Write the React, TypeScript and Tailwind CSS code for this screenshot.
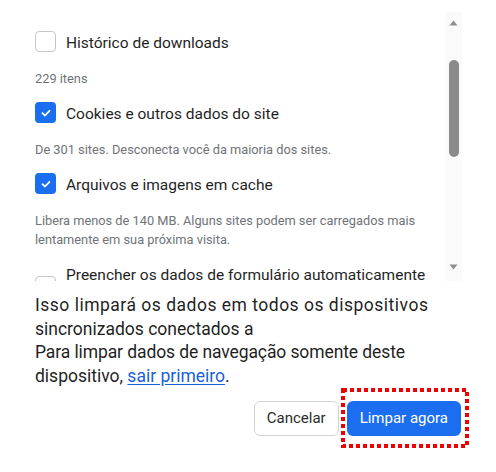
import React from 'react';

type Item = {
  label: string;
  desc?: string;
  checked: boolean;
  boxOffset?: string;
};

const items: Item[] = [
  { label: 'Histórico de downloads', desc: '229 itens', checked: false },
  { label: 'Cookies e outros dados do site', desc: 'De 301 sites. Desconecta você da maioria dos sites.', checked: true },
  {
    label: 'Arquivos e imagens em cache',
    desc: 'Libera menos de 140 MB. Alguns sites podem ser carregados mais lentamente em sua próxima visita.',
    checked: true,
  },
  { label: 'Preencher os dados de formulário automaticamente', checked: false, boxOffset: 'mt-[12px]' },
];

function Checkbox({ checked, className = '' }: { checked: boolean; className?: string }) {
  if (checked) {
    return (
      <div className={`w-[21px] h-[21px] shrink-0 rounded-[4px] bg-[#1b6ef0] flex items-center justify-center ${className}`}>
        <svg width="12" height="12" viewBox="0 0 12 12" fill="none">
          <path d="M2.5 6.2 L5 8.5 L9.5 3.8" stroke="white" strokeWidth="1.8" strokeLinecap="round" strokeLinejoin="round" />
        </svg>
      </div>
    );
  }
  return <div className={`w-[21px] h-[21px] shrink-0 rounded-[4px] border border-[#c4c7c5] bg-white ${className}`} />;
}

function Scrollbar() {
  return (
    <div className="w-[17px] shrink-0 bg-[#fafafa] flex flex-col items-center">
      <svg width="9" height="6" viewBox="0 0 9 6" className="mt-[8px]">
        <path d="M0.5 5.5 L4.5 0.5 L8.5 5.5 Z" fill="#8e8e8e" />
      </svg>
      <div className="mt-[34px] w-[10px] h-[97px] rounded-full bg-[#8b8b8b]" />
      <div className="flex-1" />
      <svg width="9" height="6" viewBox="0 0 9 6" className="mb-[11px]">
        <path d="M0.5 0.5 L8.5 0.5 L4.5 5.5 Z" fill="#8e8e8e" />
      </svg>
    </div>
  );
}

export default function App() {
  return (
    <div className="w-[496px] h-[472px] bg-white overflow-hidden font-['Roboto',sans-serif]">
      <div className="pt-[12px] pl-[35px] pr-[34px]">
        <div className="flex h-[269px] overflow-hidden">
          <div className="flex-1 pt-[20px] pr-[6px] overflow-hidden">
            {items.map((item, i) => (
              <div key={i} className={i > 0 ? 'mt-[15px]' : ''}>
                <div className="flex items-start min-h-[22px]">
                  <Checkbox checked={item.checked} className={item.boxOffset ?? '-mt-[1px]'} />
                  <span className="ml-[10px] text-[15.5px] leading-[22px] text-[#1f1f1f] whitespace-nowrap">{item.label}</span>
                </div>
                {item.desc && (
                  <p className="mt-[15px] text-[12.8px] leading-[19px] text-[#6f7378]">{item.desc}</p>
                )}
              </div>
            ))}
          </div>
          <Scrollbar />
        </div>
      </div>

      <div className="px-[35px] mt-[13px]">
        <p className="text-[17.5px] leading-[23.5px] text-[#1f1f1f]">
          <span className="tracking-[0.5px]">Isso limpará os dados em todos os dispositivos</span>
          <br />
          sincronizados conectados a
          <br />
          <span className="tracking-[-0.1px]">Para limpar dados de navegação somente deste</span> dispositivo,{' '}
          <a href="#" className="text-[#1a5fd8] underline underline-offset-2">
            sair primeiro
          </a>
          .
        </p>

        <div className="mt-[13px] flex justify-end gap-[8px]">
          <button className="h-[35px] px-[12px] rounded-[6px] border border-[#d3d3d3] bg-white text-[15px] text-[#2b2b2b]">
            Cancelar
          </button>
          <button className="relative h-[35px] px-[13px] rounded-[6px] bg-[#1b6ef0] text-[15px] text-white">
            Limpar agora
            <svg className="absolute -left-[6px] -top-[13px] pointer-events-none" width="128" height="60" viewBox="0 0 128 60">
              <rect x="2" y="2" width="124" height="56" fill="none" stroke="#f00000" strokeWidth="4" strokeDasharray="4 3" />
            </svg>
          </button>
        </div>
      </div>
    </div>
  );
}
